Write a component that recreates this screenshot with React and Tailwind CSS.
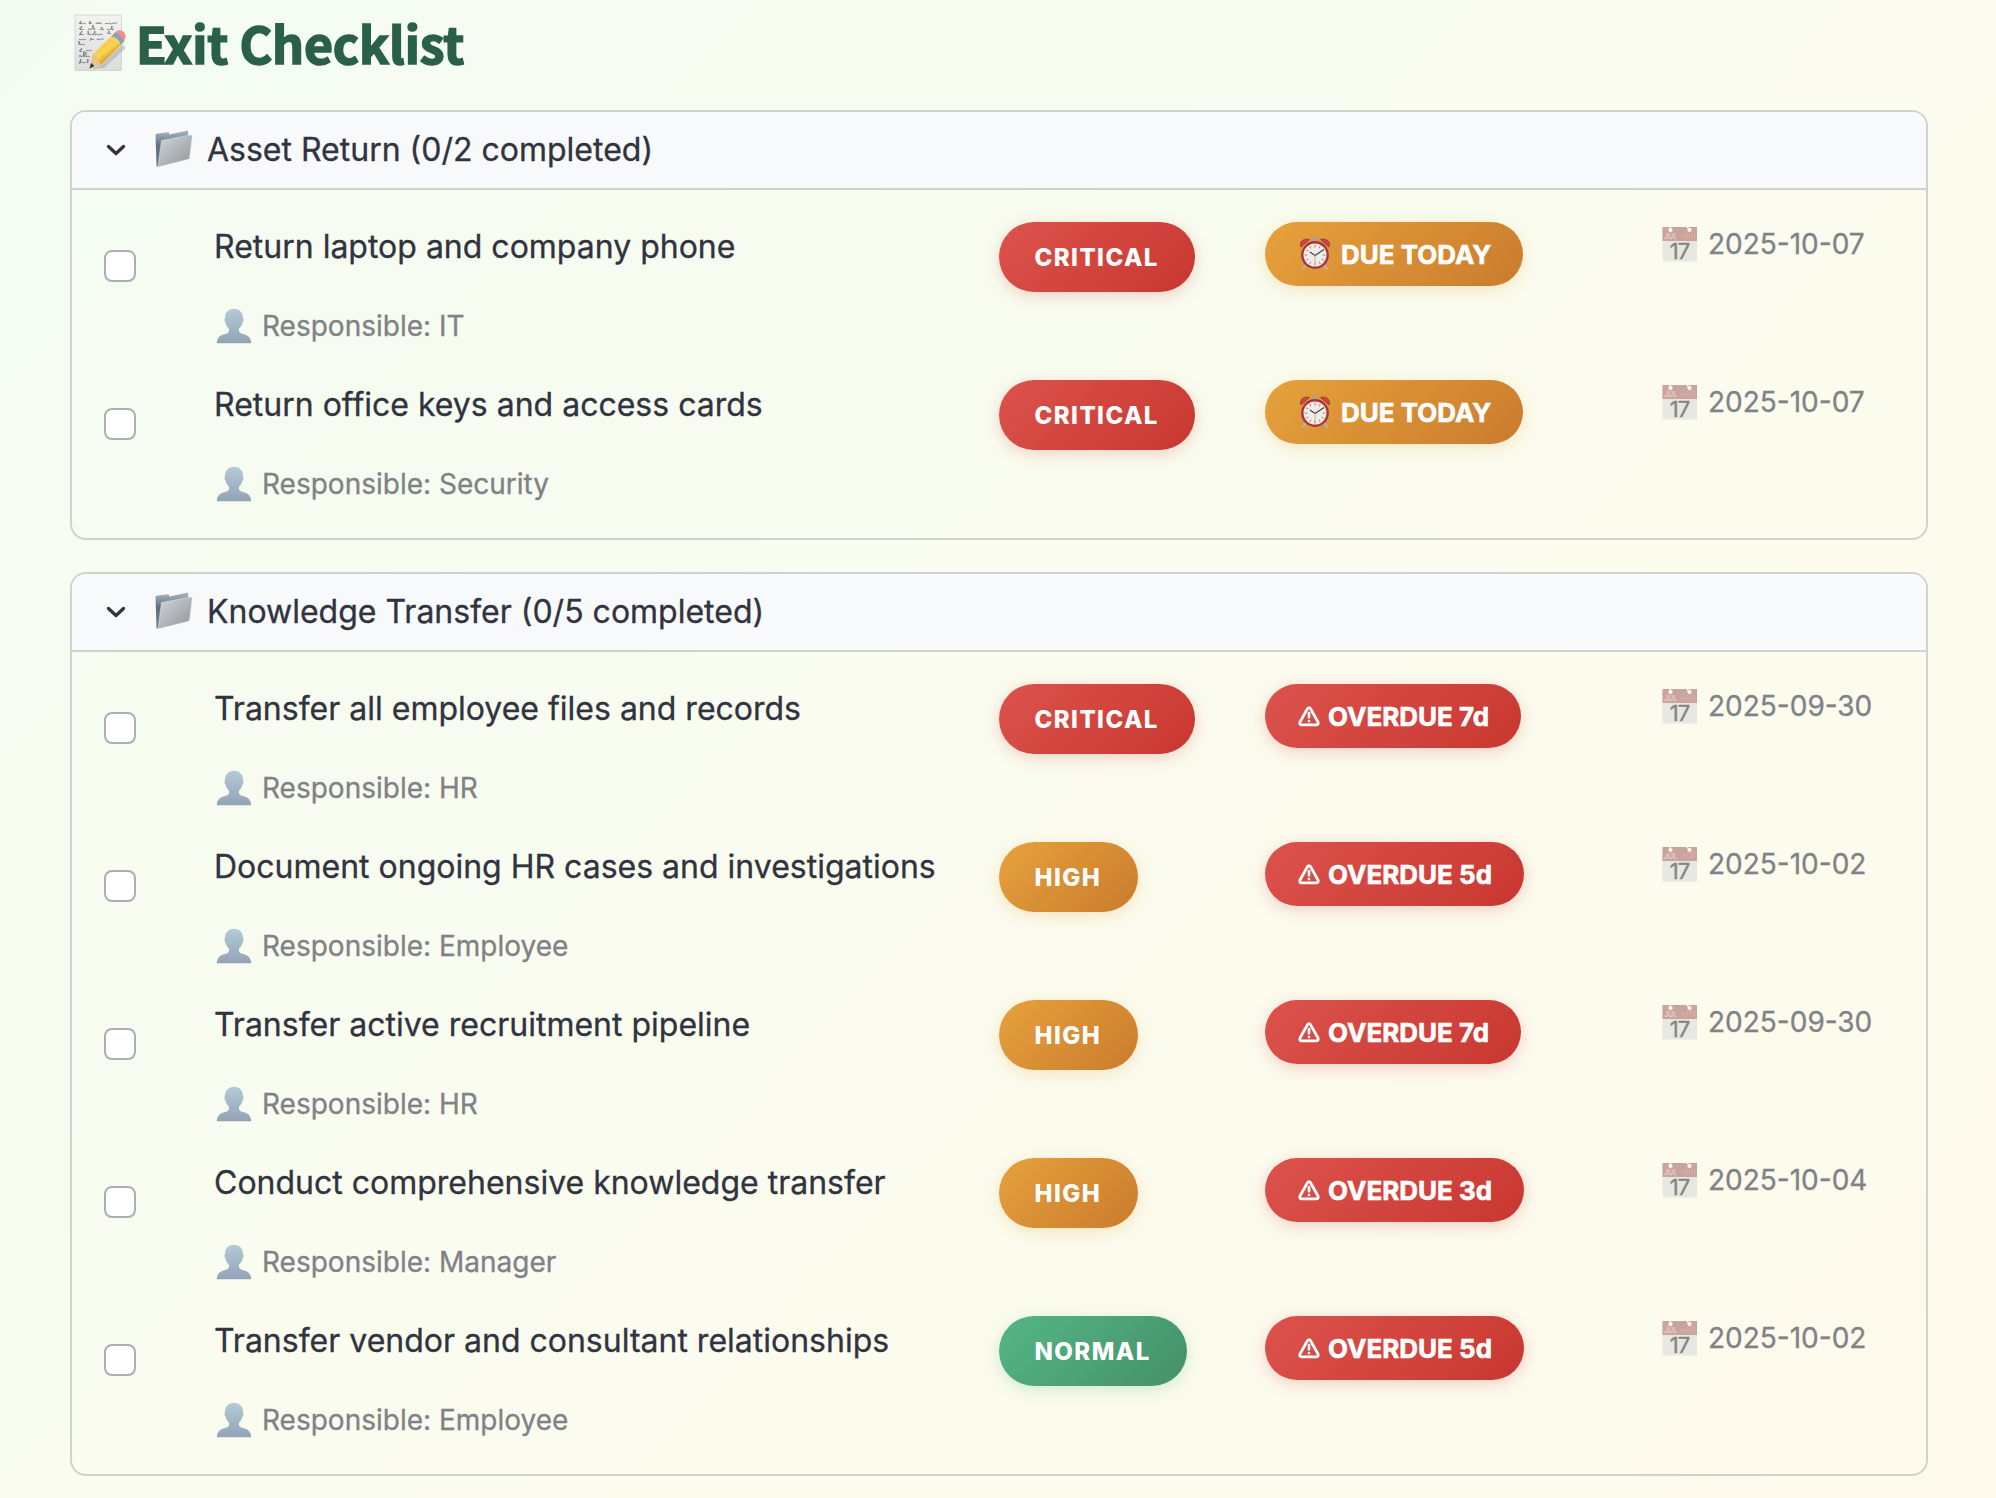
import React from "react";

const NotepadIcon = () => (
  <svg width="54" height="60" viewBox="0 0 54 60" className="shrink-0">
    <defs>
      <linearGradient id="paper" x1="0" y1="0" x2="0" y2="1">
        <stop offset="0" stopColor="#f3f3f2" />
        <stop offset="1" stopColor="#dcdcdc" />
      </linearGradient>
      <linearGradient id="pencil" x1="0.300" y1="0.300" x2="0.700" y2="0.800">
        <stop offset="0" stopColor="#f6cf4c" />
        <stop offset="0.45" stopColor="#f8d250" />
        <stop offset="1" stopColor="#c88c20" />
      </linearGradient>
    </defs>
    <rect x="1" y="1" width="46.500" height="55.500" fill="url(#paper)" stroke="#cfd0cd" strokeWidth="0.8" />
    <g fill="none" stroke="#666" strokeWidth="0.7">
      <path d="M5 10l2-3-1 3q1-2 2 0l2-1 2 1M15 10l1-3v3q1-2 2 0M22 10q0-2 1-1l1 1 1-2 1 2 2-1M31 10q1-2 2 0l2-1 2 1 2-1 2 .5 2-1" />
      <path d="M5 15l3-3-2 4q1-2 2 0l2-1M14 16q1-3 2 0l2-1 1-4 1 5 1-2M26 16l2-3v3q1-2 2 0M33 16q1-2 2 0l2-1 1-3 0 4 2-1" />
      <path d="M5 21l3-4-2 4q1-2 2 0l2-1M14 21v-4l1 4 2-1 2 1 2-4v4l2-1 2 1 2-1 2 1M33 20l2-3v3q1-2 2 0" />
      <path d="M5 26q1-2 2 0l2-1 2 1 1-1M16 27l1-3 1 2q1-2 2 0M23 26q1-3 2 0l2-1 3 0" />
      <path d="M5 31v-4l1 4 2-1 2 1 1-1M5 37l3-3-2 4q1-2 2 0M12 37q1-2 2 0l2-1 2 1" />
      <path d="M5 43q1-4 2 0l2-1 1-5 0 6 2-5 0 5 2-1 2 1M5 50l2-5-1 4 2-1 2 1 2-1M13 49l1-4v4" />
    </g>
    <path d="M17 55l13-1 22-20-3-4-20 20z" fill="#888" opacity="0.35" />
    <path d="M18.400 40.500L38 21.500l9.500 9L27.500 50.500l-6-3z" fill="url(#pencil)" />
    <path d="M18.400 40l4 3 1 3 4.200 4.500L15.800 54z" fill="#e6c48a" />
    <path d="M17 49l3.500 3-5 2.500z" fill="#333" />
    <path d="M37.500 22l4-3.800q6 2.300 9 8.800l-3.300 3.700q-3-6-9.700-8.700z" fill="#8fa0b0" />
    <path d="M41 18.500q3-3.500 7-1.800 4 2.300 3.600 6.800-.3 2-1.600 3.300-2.500-5.500-9-8.300z" fill="#ee8f97" />
  </svg>
);

const FolderIcon = () => (
  <svg width="38" height="38" viewBox="0 0 38 38" className="shrink-0">
    <defs>
      <linearGradient id="folderFront" x1="0" y1="0" x2="1" y2="1">
        <stop offset="0" stopColor="#d3d6d9" />
        <stop offset="1" stopColor="#8f959b" />
      </linearGradient>
      <linearGradient id="folderBack" x1="0" y1="0" x2="0" y2="1">
        <stop offset="0" stopColor="#a9b8c3" />
        <stop offset="0.4" stopColor="#5f7282" />
        <stop offset="1" stopColor="#6e7b86" />
      </linearGradient>
    </defs>
    <path d="M.5 5q0-1 1-1.300L13 2.200q1 0 1.200 1.200v1L33 .6l.4 5L4 36l-2.500.5z" fill="url(#folderBack)" />
    <path d="M6.500 10.500L36 5q1.300 0 1.200 1.200L34.500 28q-.2 1-1.200 1.300L3 37z" fill="url(#folderFront)" stroke="#e6e8ea" strokeWidth="0.5" />
  </svg>
);

const PersonIcon = () => (
  <svg width="36" height="36" viewBox="0 0 36 36" className="shrink-0">
    <defs>
      <linearGradient id="person" x1="0" y1="0" x2="0" y2="1">
        <stop offset="0" stopColor="#b4cad8" />
        <stop offset="1" stopColor="#92a3b6" />
      </linearGradient>
    </defs>
    <path d="M18 .8c5.500 0 9.200 4 9 9.500 1 .5.800 2.500-.5 4.500-.8 3-2 4.500-3.500 6-.5 2.500.5 4.200 3 5 5 1.200 9 3 9.200 9.500H.8C1 29 5 27 10 25.800c2.500-.8 3.500-2.500 3-5-1.500-1.500-2.700-3-3.500-6-1.300-2-1.500-4-.5-4.500C8.800 4.800 12.500.8 18 .8z" fill="url(#person)" />
  </svg>
);

const CalendarIcon = () => (
  <svg width="36" height="36" viewBox="0 0 36 36" className="shrink-0">
    <rect x="0.500" y="1" width="34.500" height="34.500" fill="#e7e8e2" />
    <rect x="0.500" y="1" width="34.500" height="14" fill="#cba29c" />
    <circle cx="8.500" cy="4" r="2.100" fill="#fbfcee" />
    <circle cx="27.500" cy="4" r="2.100" fill="#fbfcee" />
    <path d="M8 0l.5 3M24.500 .5l3 3" stroke="#fbfcee" strokeWidth="1.300" />
    <text x="2" y="13" className="font-['Inter'] text-[7px] font-bold" fill="#e3cdc8">JUL</text>
    <path d="M20 12.500v-4M22.500 12.500v-4M25 12.500V7M27.500 12.500V7M30 12.500V6M32.500 12.500V6" stroke="#d4b0ab" strokeWidth="1" />
    <text x="17.500" y="32.500" textAnchor="middle" className="font-['Inter'] text-[22px] tracking-[-1px]" fill="#85877f" stroke="#85877f" strokeWidth="0.400">17</text>
  </svg>
);

const ClockIcon = () => (
  <svg width="32" height="34" viewBox="0 0 32 34" className="shrink-0">
    <path d="M7 28l-3 4M25 28l3 4" stroke="#b9b2ae" strokeWidth="2" strokeLinecap="round" />
    <rect x="13.500" y="0.500" width="5" height="3" rx="1" fill="#a7a09c" />
    <path d="M2 10C0 5 4 1 10.500 2.500zM30 10c2-5-2-9-8.500-7.500z" fill="#c9474c" stroke="#9c3038" strokeWidth="0.800" />
    <circle cx="16" cy="18" r="12.700" fill="#eeedea" stroke="#a9343a" strokeWidth="2.400" />
    <g stroke="#d77" strokeWidth="1">
      <path d="M16 7.500v3M16 25.500v3M5.500 18h3M23.500 18h3M10.700 9l1.300 2.500M21.300 9L20 11.500M7 12.700l2.500 1.300M25 12.700L22.500 14M7 23.300L9.500 22M25 23.300L22.500 22M10.700 27l1.300-2.500M21.300 27L20 24.500" />
    </g>
    <path d="M11 15l5 3.500 9-6" fill="none" stroke="#444" strokeWidth="1.200" />
    <path d="M16 18v9" stroke="#c8a67d" strokeWidth="0.900" />
  </svg>
);

const WarningIcon = () => (
  <svg width="22" height="21" viewBox="0 0 22 21" className="shrink-0" fill="none" stroke="#fff" strokeLinejoin="round" strokeLinecap="round">
    <path d="M9.500 2.600q1.500-2 3 0l7.500 13.400q.8 2.600-1.500 2.900H3.500q-2.300-.3-1.500-2.900z" strokeWidth="2.800" />
    <path d="M11 7v4.300M11 15v.1" strokeWidth="2.700" />
  </svg>
);

const priorityStyles = {
  CRITICAL: "w-[196px] from-[#dc524c] to-[#c83730] shadow-[0_4px_16px_rgba(220,80,75,0.25)]",
  HIGH: "w-[139px] from-[#e6a23c] to-[#ca7b2d] shadow-[0_4px_16px_rgba(230,162,60,0.25)]",
  NORMAL: "w-[188px] from-[#55b685] to-[#45906a] shadow-[0_4px_16px_rgba(85,182,133,0.25)]",
};

const dueWidths = {
  "DUE TODAY": "w-[258px]",
  "OVERDUE 7d": "w-[256px]",
  "OVERDUE 5d": "w-[259px]",
  "OVERDUE 3d": "w-[259px]",
};

const sections = [
  {
    name: "Asset Return (0/2 completed)",
    items: [
      ["Return laptop and company phone", "IT", "CRITICAL", "DUE TODAY", "2025-10-07"],
      ["Return office keys and access cards", "Security", "CRITICAL", "DUE TODAY", "2025-10-07"],
    ],
  },
  {
    name: "Knowledge Transfer (0/5 completed)",
    items: [
      ["Transfer all employee files and records", "HR", "CRITICAL", "OVERDUE 7d", "2025-09-30"],
      ["Document ongoing HR cases and investigations", "Employee", "HIGH", "OVERDUE 5d", "2025-10-02"],
      ["Transfer active recruitment pipeline", "HR", "HIGH", "OVERDUE 7d", "2025-09-30"],
      ["Conduct comprehensive knowledge transfer", "Manager", "HIGH", "OVERDUE 3d", "2025-10-04"],
      ["Transfer vendor and consultant relationships", "Employee", "NORMAL", "OVERDUE 5d", "2025-10-02"],
    ],
  },
];

function Row({ item }) {
  const [title, owner, priority, due, date] = item;
  const today = due === "DUE TODAY";
  return (
    <div className="grid h-[158px] grid-cols-[110px_785px_266px_395px_1fr] pl-[32px]">
      <div className="pt-[28px]">
        <div className="size-[32px] rounded-[8px] border-2 border-[#adadb4] bg-white" />
      </div>
      <div className="flex flex-col">
        <div className="mt-px h-[48px] text-[32px] leading-[48px] text-[#31333f] [-webkit-text-stroke:0.3px_#31333f]">{title}</div>
        <div className="mt-[34px] flex h-[42px] items-center gap-[10px] pl-[2px] text-[28px] text-[#808285] [-webkit-text-stroke:0.3px_#808285]">
          <PersonIcon />
          <span>Responsible: {owner}</span>
        </div>
      </div>
      <div>
        <div className={`flex h-[70px] items-center rounded-full bg-linear-135 pt-px pl-[35.5px] text-[24px] font-extrabold tracking-[1.44px] text-white ${priorityStyles[priority]}`}>
          {priority}
        </div>
      </div>
      <div>
        <div
          className={`flex h-[64px] items-center rounded-full bg-linear-135 text-[26px] font-bold text-white ${dueWidths[due]} ${
            today
              ? "gap-[10px] from-[#e6a23c] to-[#ca7b2d] pl-[34px] shadow-[0_4px_16px_rgba(230,162,60,0.25)]"
              : "gap-[8px] from-[#dc524c] to-[#c83730] pl-[33px] shadow-[0_4px_16px_rgba(220,80,75,0.25)]"
          }`}
        >
          {today ? <ClockIcon /> : <WarningIcon />}
          <span className="whitespace-nowrap [-webkit-text-stroke:0.6px_white]">{due}</span>
        </div>
      </div>
      <div className="flex h-[43px] items-center gap-[10px] pl-[2px] text-[28px] text-[#808285] [-webkit-text-stroke:0.3px_#808285]">
        <CalendarIcon />
        <span className="whitespace-nowrap">{date}</span>
      </div>
    </div>
  );
}

export default function App() {
  return (
    <div className="h-[1498px] w-[1996px] overflow-hidden bg-linear-135 from-[#f4fcf2] via-[#fafcef] to-[#fefaec] px-[70px] font-['Inter',sans-serif]">
      <h1 className="flex h-[110px] items-start gap-[8px] pt-[14px] pl-[4px]">
        <NotepadIcon />
        <span className="-mt-[7px] font-['Noto_Sans_CJK_JP',sans-serif] text-[50px] leading-[70px] font-bold tracking-[-0.15px] text-[#2a6049] [-webkit-text-stroke:1.6px_#2a6049]">
          Exit Checklist
        </span>
      </h1>
      <main className="flex flex-col gap-[32px]">
        {sections.map((s) => (
          <section key={s.name} className="w-[1858px] rounded-[16px] border-2 border-[#cfd3cb]">
            <div className="flex h-[78px] items-center rounded-t-[14px] border-b-2 border-[#cfd3cb] bg-[#f8f9fb] pl-[34px] text-[32px] text-[#31333f] [-webkit-text-stroke:0.3px_#31333f]">
              <svg width="20" height="12" viewBox="0 0 20 12" fill="none" stroke="#31333f" strokeWidth="3.300" strokeLinecap="round" strokeLinejoin="round" className="-mt-[1px]">
                <path d="M2.500 2.500l7.500 7 7.500-7" />
              </svg>
              <span className="ml-[29px] -mt-[2px]"><FolderIcon /></span>
              <span className="ml-[14px]">{s.name}</span>
            </div>
            <div className="pt-[32px]">
              {s.items.map((it) => (
                <Row key={it[0]} item={it} />
              ))}
            </div>
          </section>
        ))}
      </main>
    </div>
  );
}
